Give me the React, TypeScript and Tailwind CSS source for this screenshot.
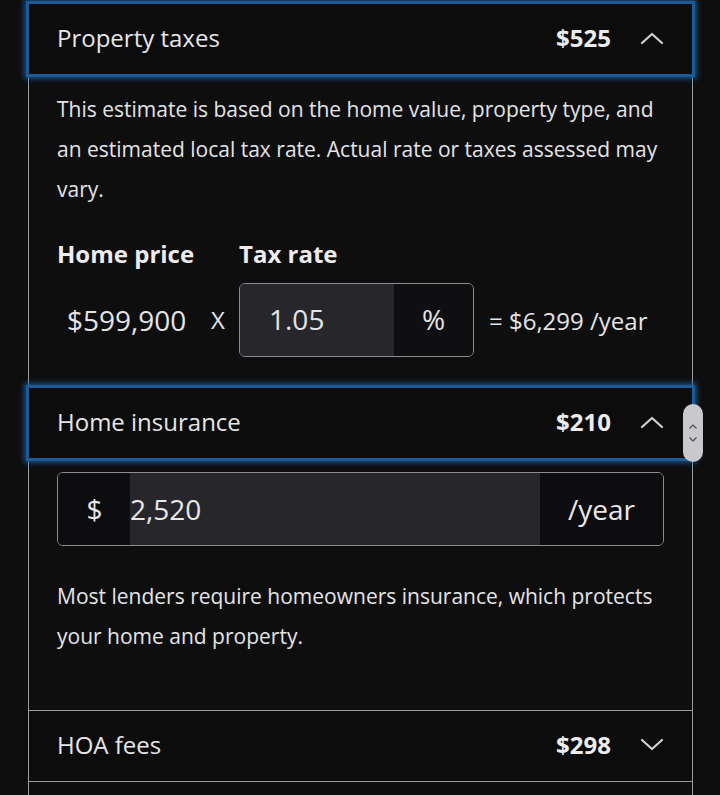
import React from "react";

const Chevron = ({ up }: { up: boolean }) => (
  <svg width="24" height="14" viewBox="0 0 24 14" fill="none" stroke="#d0d0d4" strokeWidth="2.2" strokeLinecap="round" strokeLinejoin="round">
    {up ? <polyline points="2,12 12,3 22,12" /> : <polyline points="2,2 12,11 22,2" />}
  </svg>
);

const Header = ({ title, amount, up, focused }: { title: string; amount: string; up: boolean; focused?: boolean }) => (
  <div
    className={
      "flex items-center h-[70px] pl-[28px] pr-[28px] pb-[3px] bg-[#0c0c0d] relative z-10 " +
      (focused ? "shadow-[0_0_0_3px_#1b5b98,0_0_5px_5px_rgba(27,91,152,0.8)]" : "")
    }
  >
    <span className="text-[24px] text-[#e6e6e8] flex-1">{title}</span>
    <span className="text-[24px] font-bold text-[#ececee] mr-[29px]">{amount}</span>
    <Chevron up={up} />
  </div>
);

export default function App() {
  return (
    <div className="min-h-[795px] bg-[#0e0e0f] pt-[4px] overflow-hidden" style={{ fontFamily: '"Open Sans", "Noto Sans", sans-serif' }}>
      <div className="ml-[28px] w-[665px] border-x border-[#9c9ca0] relative">
        <Header title="Property taxes" amount="$525" up focused />
        <div className="pl-[28px] pr-[28px] pt-[15px] pb-[31px]">
          <p className="text-[21px] leading-[40px] text-[#e4e4e7]">
            This estimate is based on the home value, property type, and an estimated local tax rate. Actual rate or taxes assessed may vary.
          </p>
          <div className="flex mt-[30px] text-[24px] font-bold text-[#ececee] leading-[30px]">
            <span className="w-[182px]">Home price</span>
            <span>Tax rate</span>
          </div>
          <div className="flex items-center mt-[14px] text-[#e4e4e7]">
            <span className="text-[28px] pl-[10px] w-[154px]">$599,900</span>
            <span className="text-[24px] w-[28px]">X</span>
            <div className="flex h-[74px] w-[235px] rounded-[6px] border border-[#8c8c90] overflow-hidden">
              <div className="w-[154px] bg-[#27272b] flex items-center pl-[29px] pb-[2px] text-[28px]">1.05</div>
              <div className="flex-1 bg-[#0f0f12] flex items-center justify-center pb-[2px] text-[28px]">%</div>
            </div>
            <span className="text-[24px] ml-[15px] pt-[2px]">= $6,299 /year</span>
          </div>
        </div>
        <Header title="Home insurance" amount="$210" up focused />
        <div className="pl-[28px] pr-[28px] pt-[14px] pb-[54px]">
          <div className="flex h-[74px] rounded-[6px] border border-[#8c8c90] overflow-hidden text-[28px] text-[#e8e8ea]">
            <div className="w-[72px] bg-[#0d0d10] flex items-center justify-center pl-[1px]">$</div>
            <div className="flex-1 bg-[#27272b] flex items-center">2,520</div>
            <div className="w-[123px] bg-[#0d0d10] flex items-center justify-center">/year</div>
          </div>
          <p className="mt-[30px] text-[21px] leading-[40px] text-[#e4e4e7]">
            Most lenders require homeowners insurance, which protects your home and property.
          </p>
        </div>
        <div className="border-y border-[#9c9ca0]">
          <Header title="HOA fees" amount="$298" up={false} />
        </div>
        <div className="h-[40px]" />
        <div className="absolute right-[-11px] top-[400px] w-[20px] h-[58px] rounded-full bg-[#c9c9cd] z-20 flex flex-col items-center justify-center gap-[8px]">
          <svg width="8" height="5" viewBox="0 0 8 5" fill="none" stroke="#4a4a50" strokeWidth="1.2"><polyline points="0.5,4.5 4,1 7.5,4.5" /></svg>
          <svg width="8" height="5" viewBox="0 0 8 5" fill="none" stroke="#4a4a50" strokeWidth="1.2"><polyline points="0.5,0.5 4,4 7.5,0.5" /></svg>
        </div>
      </div>
    </div>
  );
}
